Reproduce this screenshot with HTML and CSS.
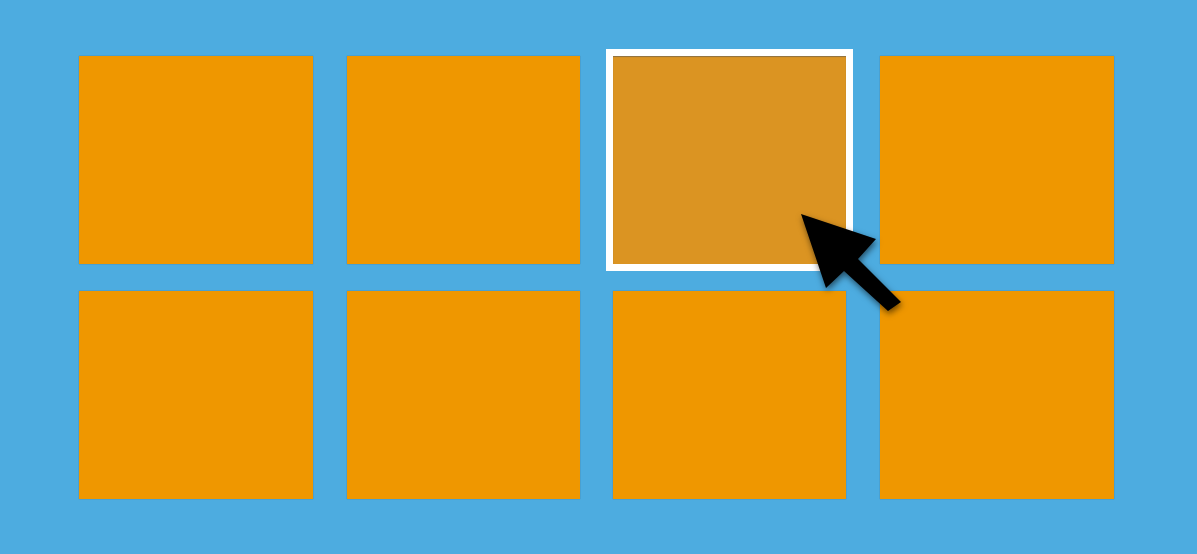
FILE: index.html
```html
<!DOCTYPE html>
<html lang="en">
<head>
<meta charset="utf-8">
<title>Tiles</title>
<link rel="stylesheet" href="styles.css">
</head>
<body>
<main class="stage">
  <div class="grid">
    <div class="tile"></div>
    <div class="tile"></div>
    <div class="tile tile-selected"></div>
    <div class="tile"></div>
    <div class="tile"></div>
    <div class="tile"></div>
    <div class="tile"></div>
    <div class="tile"></div>
  </div>
  <svg class="cursor" width="120" height="114" viewBox="0 0 120 114" aria-hidden="true">
    <polygon points="6,6 81,31 63,51 106,94 93,103 49,63 31,80" fill="#000"/>
  </svg>
</main>
</body>
</html>
```
FILE: styles.css
```css
html, body {
  margin: 0;
  padding: 0;
}
body {
  background: #4dace0;
  width: 1197px;
  height: 554px;
  overflow: hidden;
  font-family: "Liberation Sans", Arial, sans-serif;
}
.stage {
  position: relative;
  width: 1197px;
  height: 554px;
}
.grid {
  display: grid;
  grid-template-columns: 234px 233px 233px 234px;
  grid-template-rows: repeat(2, 208px);
  column-gap: 33.67px;
  row-gap: 27px;
  padding: 56px 0 0 79px;
}
.tile {
  background: #ef9700;
  box-shadow: 0 0 1px rgba(60, 60, 60, 0.55);
}
.tile-selected {
  background: #db9422;
  box-shadow: inset 0 1px 1px rgba(90, 90, 90, 0.6), 0 0 0 7px #ffffff;
}
.cursor {
  position: absolute;
  left: 795px;
  top: 208px;
  filter: drop-shadow(1px 3px 3px rgba(0, 0, 0, 0.55));
  pointer-events: none;
}
```
